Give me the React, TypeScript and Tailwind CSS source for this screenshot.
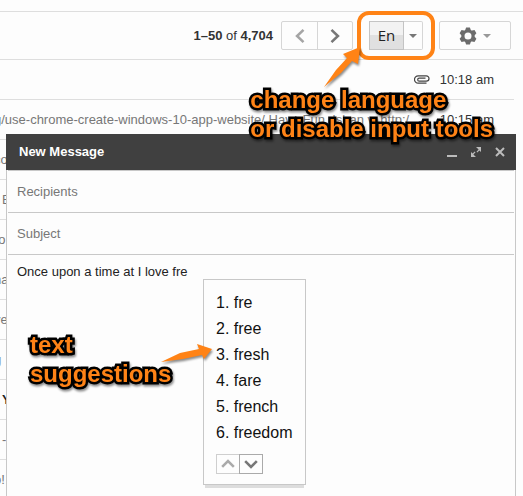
import * as React from "react";

const ROWS = [
  { id: "r2", snippet: "g/use-chrome-create-windows-10-app-website/ Have Fun, Ishan v. http:/...", time: "10:15 am" },
  { id: "r3", snippet: "co" },
  { id: "r4", snippet: "E", wordStart: true },
  { id: "r5", snippet: "ro" },
  { id: "r6", snippet: "na" },
  { id: "r7", snippet: "ve" },
  { id: "r8", snippet: "g" },
  { id: "r9", snippet: "Y", wordStart: true, unread: true },
  { id: "r10", snippet: "-", wordStart: true },
  { id: "r11", snippet: "o!" },
];

const SUGGESTIONS = ["fre", "free", "fresh", "fare", "french", "freedom"];

function Chevron({ d, className }: { d: string; className: string }) {
  return (
    <svg viewBox="0 0 12 12" className={className} fill="none" stroke="currentColor" aria-hidden>
      <path d={d} strokeWidth="2.2" />
    </svg>
  );
}

function Caret({ className }: { className: string }) {
  return (
    <svg viewBox="0 0 8 4" className={className} fill="currentColor" aria-hidden>
      <path d="M0 0h8L4 4z" />
    </svg>
  );
}

function Gear() {
  const teeth = [0, 60, 120, 180, 240, 300];
  return (
    <svg viewBox="0 0 18 18" className="h-[18px] w-[18px]" aria-hidden>
      <g fill="#6c6c6c">
        {teeth.map((angle) => (
          <path key={angle} d="M5.9 4L7.1 .4h3.8L12.1 4z" transform={`rotate(${angle} 9 9)`} />
        ))}
      </g>
      <circle cx="9" cy="9" r="5" fill="#fdfdfd" stroke="#6c6c6c" strokeWidth="3" />
    </svg>
  );
}

function Paperclip() {
  return (
    <svg viewBox="0 0 16 9" className="h-[9px] w-4" fill="none" stroke="#444" strokeWidth="1.2" aria-hidden>
      <path d="M12.5 8.2H4.2a3.7 3.7 0 0 1 0-7.4h8.1a2.7 2.7 0 0 1 0 5.4H5.2a1.5 1.5 0 0 1 0-3h6.3" />
    </svg>
  );
}

function Toolbar() {
  return (
    <div className="mt-[11px] flex h-[49px] items-center justify-end border-y border-[#dedede] pr-3">
      <p className="mr-2 text-[13px] text-[#333]">
        <b>1–50</b> of <b>4,704</b>
      </p>
      <div className="mr-4 flex h-[29px] rounded-[2px] border border-[#d6d6d6] text-[#777]">
        <button type="button" aria-label="Newer" className="flex w-[35px] items-center justify-center text-[#a5a5a5]">
          <Chevron d="M9 .8L3.5 6 9 11.2" className="h-3.5 w-3.5" />
        </button>
        <button
          type="button"
          aria-label="Older"
          className="flex w-[35px] items-center justify-center border-l border-[#d6d6d6]"
        >
          <Chevron d="M3 .8L8.5 6 3 11.2" className="h-3.5 w-3.5" />
        </button>
      </div>
      <div className="relative mr-4 flex h-[29px]">
        <button
          type="button"
          className="w-[35px] border border-[#c4c4c4] bg-linear-to-b from-[#f2f2f2] from-50% to-[#e0e0e0] to-50% font-['Open_Sans',sans-serif] text-[15px] leading-none font-medium text-[#222]"
        >
          En
        </button>
        <button
          type="button"
          aria-label="Select input tool"
          className="flex w-[19px] items-center justify-center rounded-r-[2px] border border-l-0 border-[#d6d6d6] text-[#777]"
        >
          <Caret className="h-1 w-2" />
        </button>
        <div className="pointer-events-none absolute -inset-x-3 -inset-y-2.5 rounded-xl border-4 border-[#ff8316]" />
      </div>
      <button
        type="button"
        aria-label="Settings"
        className="flex h-[29px] w-[72px] items-center justify-center gap-1.5 rounded-[2px] border border-[#d6d6d6] text-[#999]"
      >
        <Gear />
        <Caret className="h-1 w-2" />
      </button>
    </div>
  );
}

function MailList() {
  return (
    <div className="mr-[9px] text-[13px] text-[#777]">
      <div className="flex h-10 items-center justify-end gap-2.5 border-b border-[#dedede] pr-5">
        <Paperclip />
        <span className="text-[#333]">10:18 am</span>
      </div>
      {ROWS.map((row) => (
        <div key={row.id} className="flex h-10 items-center justify-between border-b border-[#dedede] pr-5">
          <span className={`${row.wordStart ? "ml-0.5" : "-ml-1.5"} ${row.unread ? "font-bold text-[#222]" : ""}`}>
            {row.snippet}
          </span>
          <span className="text-[#333]">{row.time}</span>
        </div>
      ))}
    </div>
  );
}

function Suggestions() {
  return (
    <div className="absolute top-[145px] left-[196px] border border-[#c8c8c8] bg-[#fdfdfd] px-3 pt-2.5 pb-2.5 shadow-[0_5px_0_-2px_#dddddd]">
      <ol className="text-base leading-[26px] text-[#111]">
        {SUGGESTIONS.map((word, i) => (
          <li key={word} className="whitespace-nowrap">
            {i + 1}. {word}
          </li>
        ))}
      </ol>
      <div className="mt-2 flex h-5 text-[#777]">
        <button
          type="button"
          aria-label="Previous page"
          className="flex w-6 items-center justify-center border border-[#cfcfcf] text-[#aaa]"
        >
          <Chevron d="M1 8.5L6 3.5l5 5" className="h-3.5 w-3.5" />
        </button>
        <button
          type="button"
          aria-label="Next page"
          className="-ml-px flex w-6 items-center justify-center border border-[#aaa]"
        >
          <Chevron d="M1 3.5L6 8.5l5-5" className="h-3.5 w-3.5" />
        </button>
      </div>
    </div>
  );
}

function Compose() {
  return (
    <section className="absolute top-[134px] right-[7px] bottom-0 left-1.5 flex flex-col border-x border-[#c8c8c8] bg-[#fdfdfd] text-[13px]">
      <header className="-mx-px flex h-9 shrink-0 items-center bg-[#404040] pr-[11px] pl-[13px] text-[#bcbcbc]">
        <h1 className="mr-auto font-bold text-white">New Message</h1>
        <button type="button" aria-label="Minimize" className="mr-3.5">
          <svg viewBox="0 0 10 12" className="h-3 w-2.5" fill="currentColor">
            <path d="M0 9h10v2H0z" />
          </svg>
        </button>
        <button type="button" aria-label="Full screen" className="mr-3.5">
          <svg viewBox="0 0 10 10" className="h-2.5 w-2.5" fill="currentColor">
            <path d="M5 0h5v5L8.4 3.4 6.3 5.5l-.8-.8 2.1-2.1zM0 10V5l1.6 1.6 2.1-2.1.8.8-2.1 2.1L5 10z" />
          </svg>
        </button>
        <button type="button" aria-label="Close">
          <svg viewBox="0 0 10 10" className="h-2.5 w-2.5" stroke="currentColor" strokeWidth="2">
            <path d="M1 1l8 8M9 1L1 9" />
          </svg>
        </button>
      </header>
      <input
        aria-label="Recipients"
        placeholder="Recipients"
        className="mx-px h-[43px] shrink-0 border-y border-[#c8c8c8] px-[9px] outline-none placeholder:text-[#777]"
      />
      <input
        aria-label="Subject"
        placeholder="Subject"
        className="mx-px h-[42px] shrink-0 border-b border-[#c8c8c8] px-[9px] outline-none placeholder:text-[#777]"
      />
      <textarea
        aria-label="Message body"
        defaultValue="Once upon a time at I love fre"
        className="flex-1 resize-none px-2.5 py-[7px] leading-5 text-[#222] outline-none"
      />
      <Suggestions />
    </section>
  );
}

function Callout({ children, className }: { children: React.ReactNode; className: string }) {
  return (
    <p
      className={`absolute text-2xl font-bold whitespace-nowrap text-[#ff8316] [-webkit-text-stroke:5px_#000] [paint-order:stroke_fill] drop-shadow-[1px_2px_1px_rgba(0,0,0,0.45)] ${className}`}
    >
      {children}
    </p>
  );
}

export default function App() {
  return (
    <main className="relative flow-root h-screen overflow-hidden bg-[#fdfdfd] font-['Liberation_Sans',Arial,sans-serif]">
      <Toolbar />
      <MailList />
      <Compose />
      <svg
        viewBox="0 0 40 40"
        className="absolute top-[47px] right-[162px] h-10 w-10 drop-shadow-[1px_2px_1px_rgba(0,0,0,0.45)]"
        fill="#ff8316"
        aria-hidden
      >
        <path d="M3 40L15 23l11-12-4-4L39 0l-2 17-6-3-11 12z" />
      </svg>
      <Callout className="top-[85px] right-[30px] leading-[29px]">
        change language
        <br />
        or disable input tools
      </Callout>
      <svg
        viewBox="0 0 52 20"
        className="absolute top-[344px] left-[160px] h-5 w-[52px] drop-shadow-[1px_2px_1px_rgba(0,0,0,0.45)]"
        fill="#ff8316"
        aria-hidden
      >
        <path d="M1 18L20 9l19-4-2-5 15 5-8 10-2-4-19 4z" />
      </svg>
      <Callout className="top-[330px] left-[30px] leading-[29px]">
        text
        <br />
        suggestions
      </Callout>
    </main>
  );
}
